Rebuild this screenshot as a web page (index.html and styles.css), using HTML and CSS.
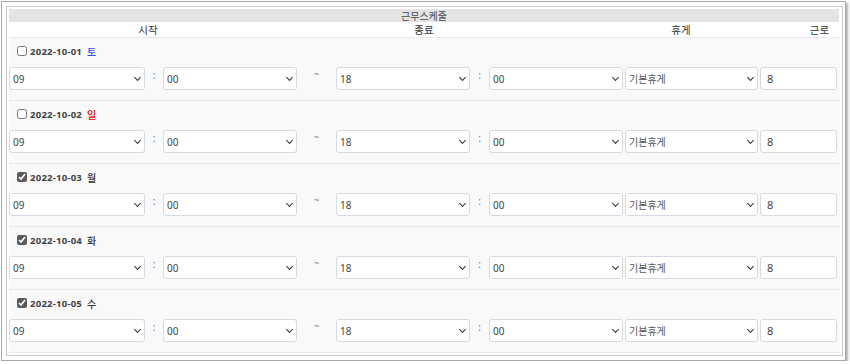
FILE: index.html
```html
<!DOCTYPE html>
<html lang="ko">
<head>
<meta charset="utf-8">
<title>근무스케줄</title>
<link rel="stylesheet" href="styles.css">
</head>
<body>
<div class="frame">
  <div class="inner">
    <div class="title">근무스케줄</div>
    <div class="colhead">
      <div>시작</div>
      <div>종료</div>
      <div>휴게</div>
      <div>근로</div>
    </div>

    <div class="row">
      <label class="date"><input type="checkbox" class="chk"><span class="d">2022-10-01</span><span class="dow sat">토</span></label>
      <div class="ctrls">
        <span class="sw"><select class="sel"><option>09</option></select></span>
        <span class="sep">:</span>
        <span class="sw"><select class="sel"><option>00</option></select></span>
        <span class="sep tilde">~</span>
        <span class="sw"><select class="sel"><option>18</option></select></span>
        <span class="sep">:</span>
        <span class="sw"><select class="sel"><option>00</option></select></span>
        <span class="sw rest"><select class="sel"><option>기본휴게</option></select></span>
        <input class="num" type="text" value="8">
      </div>
    </div>

    <div class="row">
      <label class="date"><input type="checkbox" class="chk"><span class="d">2022-10-02</span><span class="dow sun">일</span></label>
      <div class="ctrls">
        <span class="sw"><select class="sel"><option>09</option></select></span>
        <span class="sep">:</span>
        <span class="sw"><select class="sel"><option>00</option></select></span>
        <span class="sep tilde">~</span>
        <span class="sw"><select class="sel"><option>18</option></select></span>
        <span class="sep">:</span>
        <span class="sw"><select class="sel"><option>00</option></select></span>
        <span class="sw rest"><select class="sel"><option>기본휴게</option></select></span>
        <input class="num" type="text" value="8">
      </div>
    </div>

    <div class="row">
      <label class="date"><input type="checkbox" class="chk" checked><span class="d">2022-10-03</span><span class="dow">월</span></label>
      <div class="ctrls">
        <span class="sw"><select class="sel"><option>09</option></select></span>
        <span class="sep">:</span>
        <span class="sw"><select class="sel"><option>00</option></select></span>
        <span class="sep tilde">~</span>
        <span class="sw"><select class="sel"><option>18</option></select></span>
        <span class="sep">:</span>
        <span class="sw"><select class="sel"><option>00</option></select></span>
        <span class="sw rest"><select class="sel"><option>기본휴게</option></select></span>
        <input class="num" type="text" value="8">
      </div>
    </div>

    <div class="row">
      <label class="date"><input type="checkbox" class="chk" checked><span class="d">2022-10-04</span><span class="dow">화</span></label>
      <div class="ctrls">
        <span class="sw"><select class="sel"><option>09</option></select></span>
        <span class="sep">:</span>
        <span class="sw"><select class="sel"><option>00</option></select></span>
        <span class="sep tilde">~</span>
        <span class="sw"><select class="sel"><option>18</option></select></span>
        <span class="sep">:</span>
        <span class="sw"><select class="sel"><option>00</option></select></span>
        <span class="sw rest"><select class="sel"><option>기본휴게</option></select></span>
        <input class="num" type="text" value="8">
      </div>
    </div>

    <div class="row">
      <label class="date"><input type="checkbox" class="chk" checked><span class="d">2022-10-05</span><span class="dow">수</span></label>
      <div class="ctrls">
        <span class="sw"><select class="sel"><option>09</option></select></span>
        <span class="sep">:</span>
        <span class="sw"><select class="sel"><option>00</option></select></span>
        <span class="sep tilde">~</span>
        <span class="sw"><select class="sel"><option>18</option></select></span>
        <span class="sep">:</span>
        <span class="sw"><select class="sel"><option>00</option></select></span>
        <span class="sw rest"><select class="sel"><option>기본휴게</option></select></span>
        <input class="num" type="text" value="8">
      </div>
    </div>
  </div>
</div>
</body>
</html>
```

FILE: styles.css
```css
* { box-sizing: border-box; }
html, body { margin: 0; padding: 0; background: #fff; }
body {
  font-family: "Noto Sans", "Noto Sans CJK KR", sans-serif;
  color: #333;
  padding: 1px 0 0 1px;
}
.frame {
  width: 845px;
  height: 360px;
  border: 1px solid #a8a8a8;
  padding: 4px 2px 4px 4px;
  box-shadow: 2px 2px 2px rgba(0,0,0,0.3);
  background: #fff;
}
.inner {
  height: 100%;
  border: 1px solid #c9c9c9;
  padding: 2px;
}
.title {
  height: 13px;
  background: #e4e4e4;
  font-family: "Noto Sans CJK KR", sans-serif;
  font-size: 10px;
  line-height: 13px;
  text-align: center;
  color: #4a4a4a;
  margin-right: 1px;
}
.colhead {
  display: grid;
  grid-template-columns: 278px 274px 240px 37px;
  height: 16px;
  border-bottom: 1px solid #e6e9ef;
  font-family: "Noto Sans CJK KR", sans-serif;
  font-size: 10.5px;
  line-height: 15px;
  color: #333;
  text-align: center;
}
.row {
  background: #f9f9f9;
  border-bottom: 1px solid #e6e9ef;
  height: 63px;
  padding: 5px 0 0 0;
}
.date {
  display: flex;
  align-items: center;
  height: 16px;
  padding-left: 8px;
  font-size: 9.6px;
  font-weight: 700;
  color: #444;
}
.chk {
  width: 10px;
  height: 10px;
  margin: 0 3px 0 0;
  accent-color: #5a5a5a;
}
.d { letter-spacing: 0.2px; }
.dow {
  margin-left: 5px;
  font-family: "Noto Sans CJK KR", sans-serif;
  font-size: 10px;
  font-weight: 500;
  color: #333;
}
.dow.sat { color: #2f4fe6; }
.dow.sun { color: #e60000; }
.ctrls {
  display: grid;
  grid-template-columns: 136px 18px 134px 39px 134px 19px 134px 135px 79px;
  margin-top: 8px;
  height: 23px;
}
.sw {
  position: relative;
  display: block;
  height: 23px;
}
.sw::after {
  content: "";
  position: absolute;
  right: 5px;
  top: 8px;
  width: 4px;
  height: 4px;
  border-right: 1.5px solid #333;
  border-bottom: 1.5px solid #333;
  transform: rotate(45deg);
  pointer-events: none;
}
.sw.rest { margin-left: 2px; width: 133px; }
.sel {
  appearance: none;
  -webkit-appearance: none;
  display: block;
  height: 23px;
  width: 100%;
  border: 1px solid #d6dae3;
  border-radius: 3px;
  background: #fff;
  font-family: "Noto Sans", "Noto Sans CJK KR", sans-serif;
  font-size: 10px;
  color: #444;
  padding: 0 0 0 3px;
  margin: 0;
}
.rest .sel { color: #555; }
.sep {
  text-align: center;
  font-size: 10px;
  line-height: 14px;
  color: #777;
  padding-top: 1px;
}
.tilde { padding-top: 0; font-size: 9px; }
.num {
  height: 23px;
  width: 77px;
  margin-left: 2px;
  border: 1px solid #d6dae3;
  border-radius: 3px;
  background: #fff;
  font-family: "Noto Sans", sans-serif;
  font-size: 11px;
  color: #444;
  padding: 0 0 0 6px;
}
```
